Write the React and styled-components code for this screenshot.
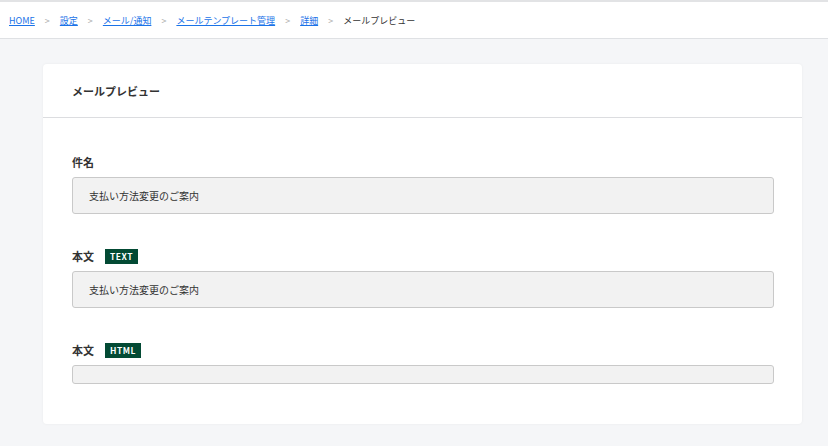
import styled, { createGlobalStyle } from "styled-components";

const Global = createGlobalStyle`
  body { margin: 0; background: #f5f6f8; font-family: "Noto Sans CJK JP", "Noto Sans", sans-serif; color: #333; }
`;

const TopBar = styled.div`
  height: 36px;
  border-top: 2px solid #e2e3e5;
  border-bottom: 1px solid #dfe1e4;
  background: #fff;
  display: flex;
  align-items: center;
  padding-left: 9px;
  font-size: 9px;
`;

const Crumb = styled.a`
  color: #1a73e8;
  text-decoration: underline;
`;

const Sep = styled.span`
  color: #aaa;
  margin: 0 10px;
`;

const Main = styled.div`
  padding: 25px 26px 20px 43px;
`;

const Card = styled.div`
  background: #fff;
  border-radius: 4px;
  box-shadow: 0 0 3px rgba(0, 0, 0, 0.05);
`;

const CardHead = styled.div`
  height: 53px;
  border-bottom: 1px solid #dcdde0;
  display: flex;
  align-items: center;
  padding-left: 29px;
  font-size: 11px;
  font-weight: 700;
`;

const CardBody = styled.div`
  padding: 36px 28px 40px 29px;
  display: flex;
  flex-direction: column;
  gap: 34px;
`;

const Field = styled.div`
  display: flex;
  flex-direction: column;
  gap: 7px;
`;

const Label = styled.div`
  display: flex;
  align-items: center;
  gap: 11px;
  font-size: 11px;
  font-weight: 700;
  height: 16px;
`;

const Badge = styled.span`
  background: #034a34;
  color: #fff;
  font-size: 8.5px;
  letter-spacing: 0.5px;
  padding: 1px 5px;
  line-height: 13px;
`;

const Box = styled.div`
  background: #f2f2f2;
  border: 1px solid #c9c9c9;
  border-radius: 3px;
  height: ${(p) => (p.$empty ? "17px" : "35px")};
  display: flex;
  align-items: center;
  padding-left: 16px;
  font-size: 10px;
`;

export default function App() {
  const crumbs = ["HOME", "設定", "メール/通知", "メールテンプレート管理", "詳細"];
  return (
    <>
      <Global />
      <TopBar>
        {crumbs.map((c) => (
          <span key={c}>
            <Crumb>{c}</Crumb>
            <Sep>&gt;</Sep>
          </span>
        ))}
        <span>メールプレビュー</span>
      </TopBar>
      <Main>
        <Card>
          <CardHead>メールプレビュー</CardHead>
          <CardBody>
            <Field>
              <Label>件名</Label>
              <Box>支払い方法変更のご案内</Box>
            </Field>
            <Field>
              <Label>本文 <Badge>TEXT</Badge></Label>
              <Box>支払い方法変更のご案内</Box>
            </Field>
            <Field>
              <Label>本文 <Badge>HTML</Badge></Label>
              <Box $empty />
            </Field>
          </CardBody>
        </Card>
      </Main>
    </>
  );
}
